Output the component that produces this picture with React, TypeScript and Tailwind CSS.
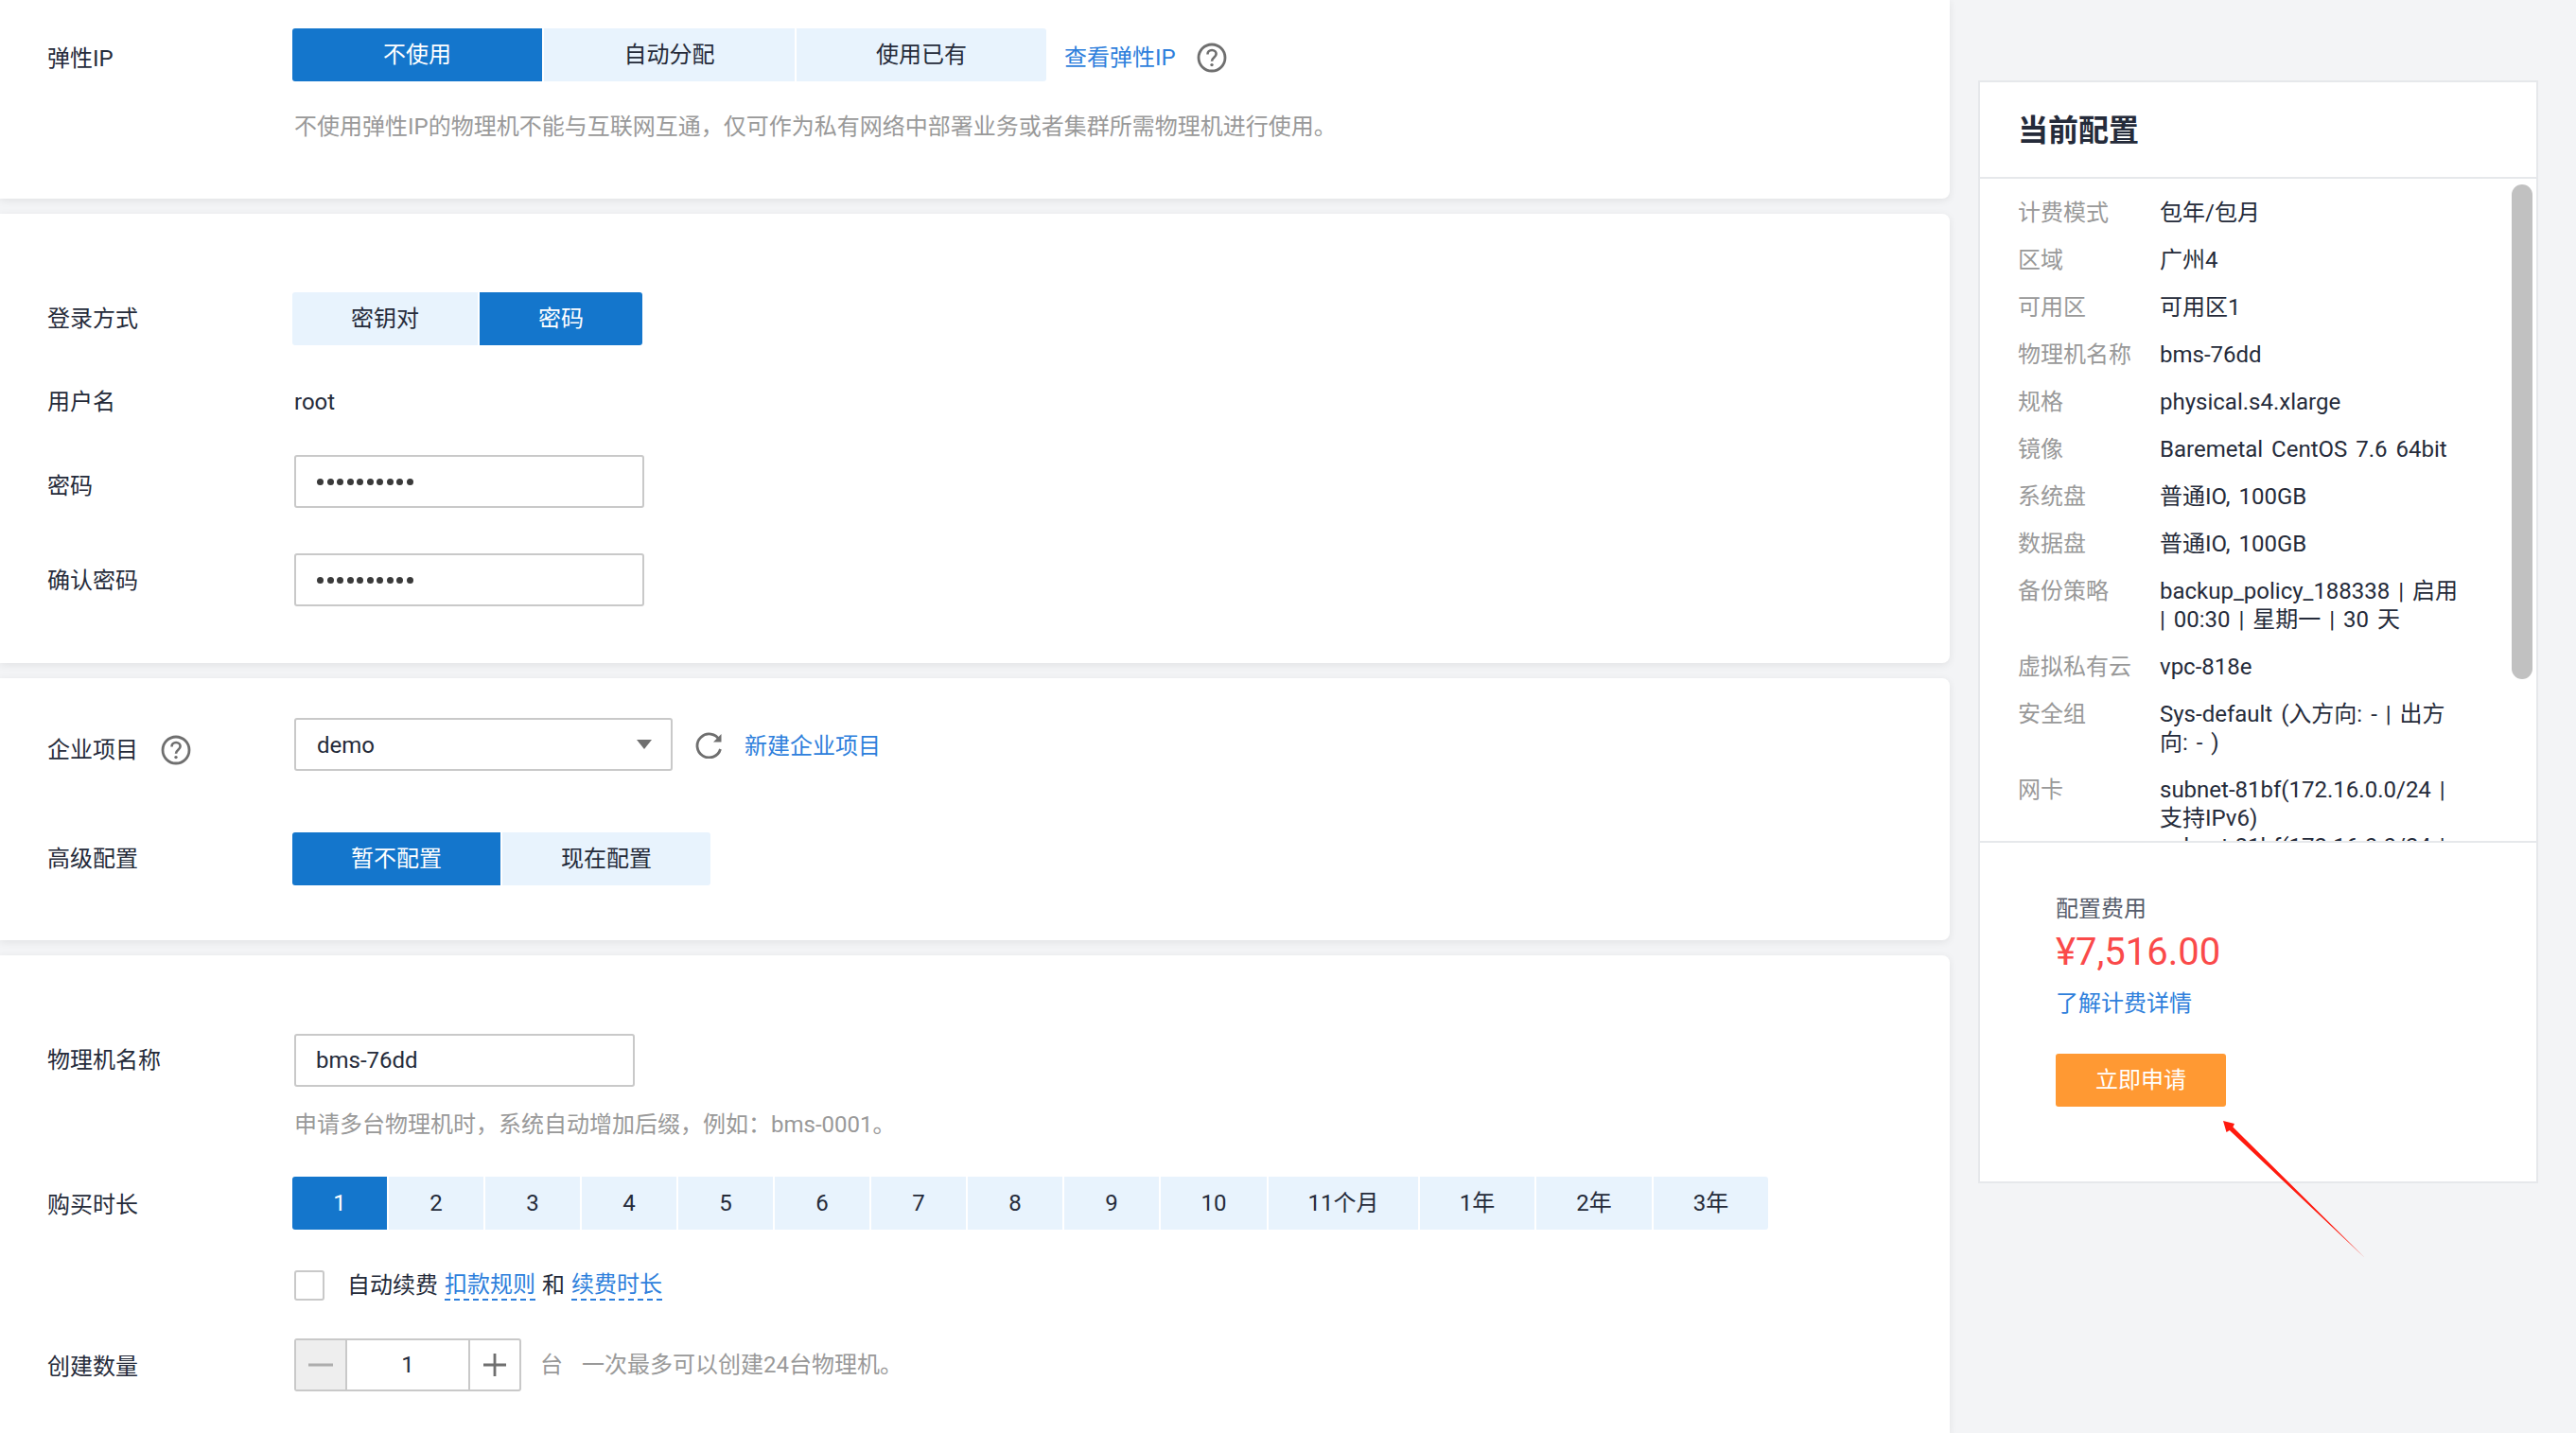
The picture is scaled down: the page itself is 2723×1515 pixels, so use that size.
const font = "font-['Roboto','Noto_Sans_CJK_SC',sans-serif]";

function Help({ className = "" }: { className?: string }) {
  return (
    <svg viewBox="0 0 32 32" className={"w-8 h-8 shrink-0 " + className} fill="none">
      <circle cx="16" cy="16" r="14" stroke="#6f6f6f" strokeWidth="2.8" />
      <path d="M11.5 12.5c0-2.6 2-4.5 4.6-4.5s4.5 1.8 4.5 4.1c0 3.6-4.6 3.8-4.6 7.6" stroke="#6f6f6f" strokeWidth="2.6" />
      <circle cx="16" cy="23.6" r="1.7" fill="#6f6f6f" />
    </svg>
  );
}

function Seg({ items, active, widths }: { items: string[]; active: number; widths: string[] }) {
  return (
    <div className="flex gap-[2px] h-14 rounded-[3px] overflow-hidden">
      {items.map((t, i) => (
        <div
          key={t}
          className={
            widths[i] +
            " flex items-center justify-center " +
            (i === active ? "bg-[#1476cc] text-white" : "bg-[#e8f3fd] text-[#252b3a]")
          }
        >
          {t}
        </div>
      ))}
    </div>
  );
}

function Label({ children }: { children: React.ReactNode }) {
  return <div className="w-[309px] shrink-0 pl-[50px] text-[#252b3a]">{children}</div>;
}

function Pwd() {
  return (
    <div className="w-[370px] h-14 ml-[2px] border-2 border-[#c9c9c9] rounded-[3px] flex items-center pl-[22px] gap-[3.5px]">
      {Array.from({ length: 10 }).map((_, i) => (
        <span key={i} className="w-[7px] h-[7px] rounded-full bg-[#3a3a3a]" />
      ))}
    </div>
  );
}

const rows: [string, string[]][] = [
  ["计费模式", ["包年/包月"]],
  ["区域", ["广州4"]],
  ["可用区", ["可用区1"]],
  ["物理机名称", ["bms-76dd"]],
  ["规格", ["physical.s4.xlarge"]],
  ["镜像", ["Baremetal CentOS 7.6 64bit"]],
  ["系统盘", ["普通IO, 100GB"]],
  ["数据盘", ["普通IO, 100GB"]],
  ["备份策略", ["backup_policy_188338 | 启用", "| 00:30 | 星期一 | 30 天"]],
  ["虚拟私有云", ["vpc-818e"]],
  ["安全组", ["Sys-default (入方向: - | 出方", "向: - )"]],
  ["网卡", ["subnet-81bf(172.16.0.0/24 |", "支持IPv6)", "subnet-81bf(172.16.0.0/24 |", "支持IPv6)"]],
];

const durations = ["1", "2", "3", "4", "5", "6", "7", "8", "9", "10", "11个月", "1年", "2年", "3年"];
const durW = [
  "w-[100px]", "w-[100px]", "w-[100px]", "w-[100px]", "w-[100px]", "w-[100px]", "w-[100px]", "w-[100px]", "w-[100px]",
  "w-[112px]", "w-[158px]", "w-[121px]", "w-[122px]", "w-[121px]",
];

const Card = "bg-white rounded-br-[8px] rounded-tr-[8px] shadow-[0_2px_8px_rgba(0,0,0,0.08)]";

export default function App() {
  return (
    <div className={font + " relative w-[2723px] h-[1515px] overflow-hidden bg-[#f3f4f6] flex text-[24px] leading-[30px]"}>
      <div className="w-[2061px] shrink-0 flex flex-col gap-4">
        {/* Section 1 */}
        <section className={Card + " h-[210px] pt-[30px] rounded-tr-none"}>
          <div className="flex items-center">
            <Label>
              <span className="relative top-[4px]">弹性IP</span>
            </Label>
            <Seg items={["不使用", "自动分配", "使用已有"]} active={0} widths={["w-[264px]", "w-[265px]", "w-[264px]"]} />
            <a className="ml-[19px] mt-[6px] text-[#2e7fdc]">查看弹性IP</a>
            <Help className="ml-[22px] mt-[6px]" />
          </div>
          <div className="ml-[311px] mt-[33px] text-[#999999]">
            不使用弹性IP的物理机不能与互联网互通，仅可作为私有网络中部署业务或者集群所需物理机进行使用。
          </div>
        </section>

        {/* Section 2 */}
        <section className={Card + " h-[475px] pt-[83px]"}>
          <div className="flex items-center">
            <Label>登录方式</Label>
            <Seg items={["密钥对", "密码"]} active={1} widths={["w-[196px]", "w-[172px]"]} />
          </div>
          <div className="flex items-center mt-[45px]">
            <Label>用户名</Label>
            <div className="ml-[2px] text-[#252b3a]">root</div>
          </div>
          <div className="flex items-center mt-[41px]">
            <Label>
              <span className="relative top-[5px]">密码</span>
            </Label>
            <Pwd />
          </div>
          <div className="flex items-center mt-[48px]">
            <Label>
              <span className="relative top-[1px]">确认密码</span>
            </Label>
            <Pwd />
          </div>
        </section>

        {/* Section 3 */}
        <section className={Card + " h-[277px] pt-[42px]"}>
          <div className="flex items-center">
            <div className="w-[309px] shrink-0 pl-[50px] text-[#252b3a] flex items-center gap-[24px] relative top-[6px]">
              企业项目
              <Help />
            </div>
            <div className="ml-[2px] w-[400px] h-14 border-2 border-[#c9c9c9] rounded-[3px] flex items-center justify-between pl-[22px] pr-[20px] text-[#252b3a]">
              <span className="relative top-[1px]">demo</span>
              <svg viewBox="0 0 16 10" className="w-4 h-[10px]">
                <path d="M0 0h16L8 10z" fill="#6f6f6f" />
              </svg>
            </div>
            <svg viewBox="0 0 28 28" className="w-7 h-7 ml-6 mt-[2px]" fill="none">
              <path d="M25.5 8.5A12.5 12.5 0 1 0 26.5 18" stroke="#6f6f6f" strokeWidth="2.8" />
              <path d="M27.5 2V10.5H19" fill="#6f6f6f" />
            </svg>
            <a className="ml-6 mt-[3px] text-[#2e7fdc]">新建企业项目</a>
          </div>
          <div className="flex items-center mt-[65px]">
            <Label>高级配置</Label>
            <Seg items={["暂不配置", "现在配置"]} active={0} widths={["w-[220px]", "w-[220px]"]} />
          </div>
        </section>

        {/* Section 4 */}
        <section className={Card + " flex-1 pt-[83px] rounded-br-none"}>
          <div className="flex items-center">
            <Label>物理机名称</Label>
            <div className="ml-[2px] w-[360px] h-14 border-2 border-[#c9c9c9] rounded-[3px] flex items-center pl-[21px] text-[#252b3a]">
              bms-76dd
            </div>
          </div>
          <div className="ml-[311px] mt-[25px] text-[#999999]">申请多台物理机时，系统自动增加后缀，例如：bms-0001。</div>
          <div className="flex items-center mt-[40px]">
            <Label>
              <span className="relative top-[2px]">购买时长</span>
            </Label>
            <Seg items={durations} active={0} widths={durW} />
          </div>
          <div className="flex items-center ml-[311px] mt-[43px]">
            <div className="w-8 h-8 border-2 border-[#c9c9c9] rounded-[3px] mr-[24px]" />
            <span className="text-[#252b3a]">自动续费</span>
            <a className="ml-[7px] text-[#2e7fdc] border-b-2 border-dashed border-[#2e7fdc]">扣款规则</a>
            <span className="mx-[7px] text-[#252b3a]">和</span>
            <a className="text-[#2e7fdc] border-b-2 border-dashed border-[#2e7fdc]">续费时长</a>
          </div>
          <div className="flex items-center mt-[40px]">
            <Label>
              <span className="relative top-[2px]">创建数量</span>
            </Label>
            <div className="ml-[2px] flex w-[240px] h-14 border-2 border-[#c9c9c9] rounded-[3px] text-[#252b3a]">
              <div className="w-[54px] bg-[#eeeeee] border-r-2 border-[#c9c9c9] flex items-center justify-center">
                <svg viewBox="0 0 26 26" className="w-[26px] h-[26px]"><path d="M0 13h26" stroke="#adadad" strokeWidth="3" /></svg>
              </div>
              <div className="flex-1 flex items-center justify-center">1</div>
              <div className="w-[54px] border-l-2 border-[#c9c9c9] flex items-center justify-center">
                <svg viewBox="0 0 24 24" className="w-6 h-6"><path d="M0 12h24M12 0v24" stroke="#6f6f6f" strokeWidth="2.8" /></svg>
              </div>
            </div>
            <span className="ml-5 text-[#999999]">台</span>
            <span className="ml-5 text-[#999999]">一次最多可以创建24台物理机。</span>
          </div>
        </section>
      </div>

      {/* Right summary */}
      <aside className="ml-[30px] mt-[85px] w-[592px] h-[1166px] bg-white border-2 border-[#e6e8eb] flex flex-col">
        <div className="h-[102px] shrink-0 border-b-2 border-[#e6e8eb] pl-[40px] pt-[2px] flex items-center text-[32px] font-bold text-[#252b3a]">
          当前配置
        </div>
        <div className="relative h-[700px] shrink-0 overflow-hidden pt-[21px] pl-[40px]">
          {rows.map(([k, v]) => (
            <div key={k} className="flex mb-5">
              <div className="w-[150px] shrink-0 text-[#999999]">{k}</div>
              <div className="w-[340px] text-[#252b3a] [word-spacing:3px]">
                {v.map((p, i) => (
                  <div key={i}>{p}</div>
                ))}
              </div>
            </div>
          ))}
          <div className="absolute right-[4px] top-[6px] w-[22px] h-[523px] rounded-full bg-[#c1c1c1]" />
        </div>
        <div className="flex-1 border-t-2 border-[#e6e8eb] pl-[80px] pt-[55px]">
          <div className="text-[#575d6c]">配置费用</div>
          <div className="mt-[6px] text-[40px] leading-[50px] text-[#fa4a4a]">¥7,516.00</div>
          <a className="block mt-[14px] text-[#2e7fdc]">了解计费详情</a>
          <div className="mt-[38px] w-[180px] h-14 bg-[#ff9933] rounded-[3px] text-white flex items-center justify-center">
            立即申请
          </div>
        </div>
      </aside>

      {/* Annotation arrow */}
      <svg className="absolute left-0 top-0 w-[2723px] h-[1515px] pointer-events-none" viewBox="0 0 2723 1515">
        <path d="M2350 1185L2362 1188L2360.4 1191.5L2500 1330L2356.8 1195.1L2353.5 1197Z" fill="#ff1a0f" />
      </svg>
    </div>
  );
}
